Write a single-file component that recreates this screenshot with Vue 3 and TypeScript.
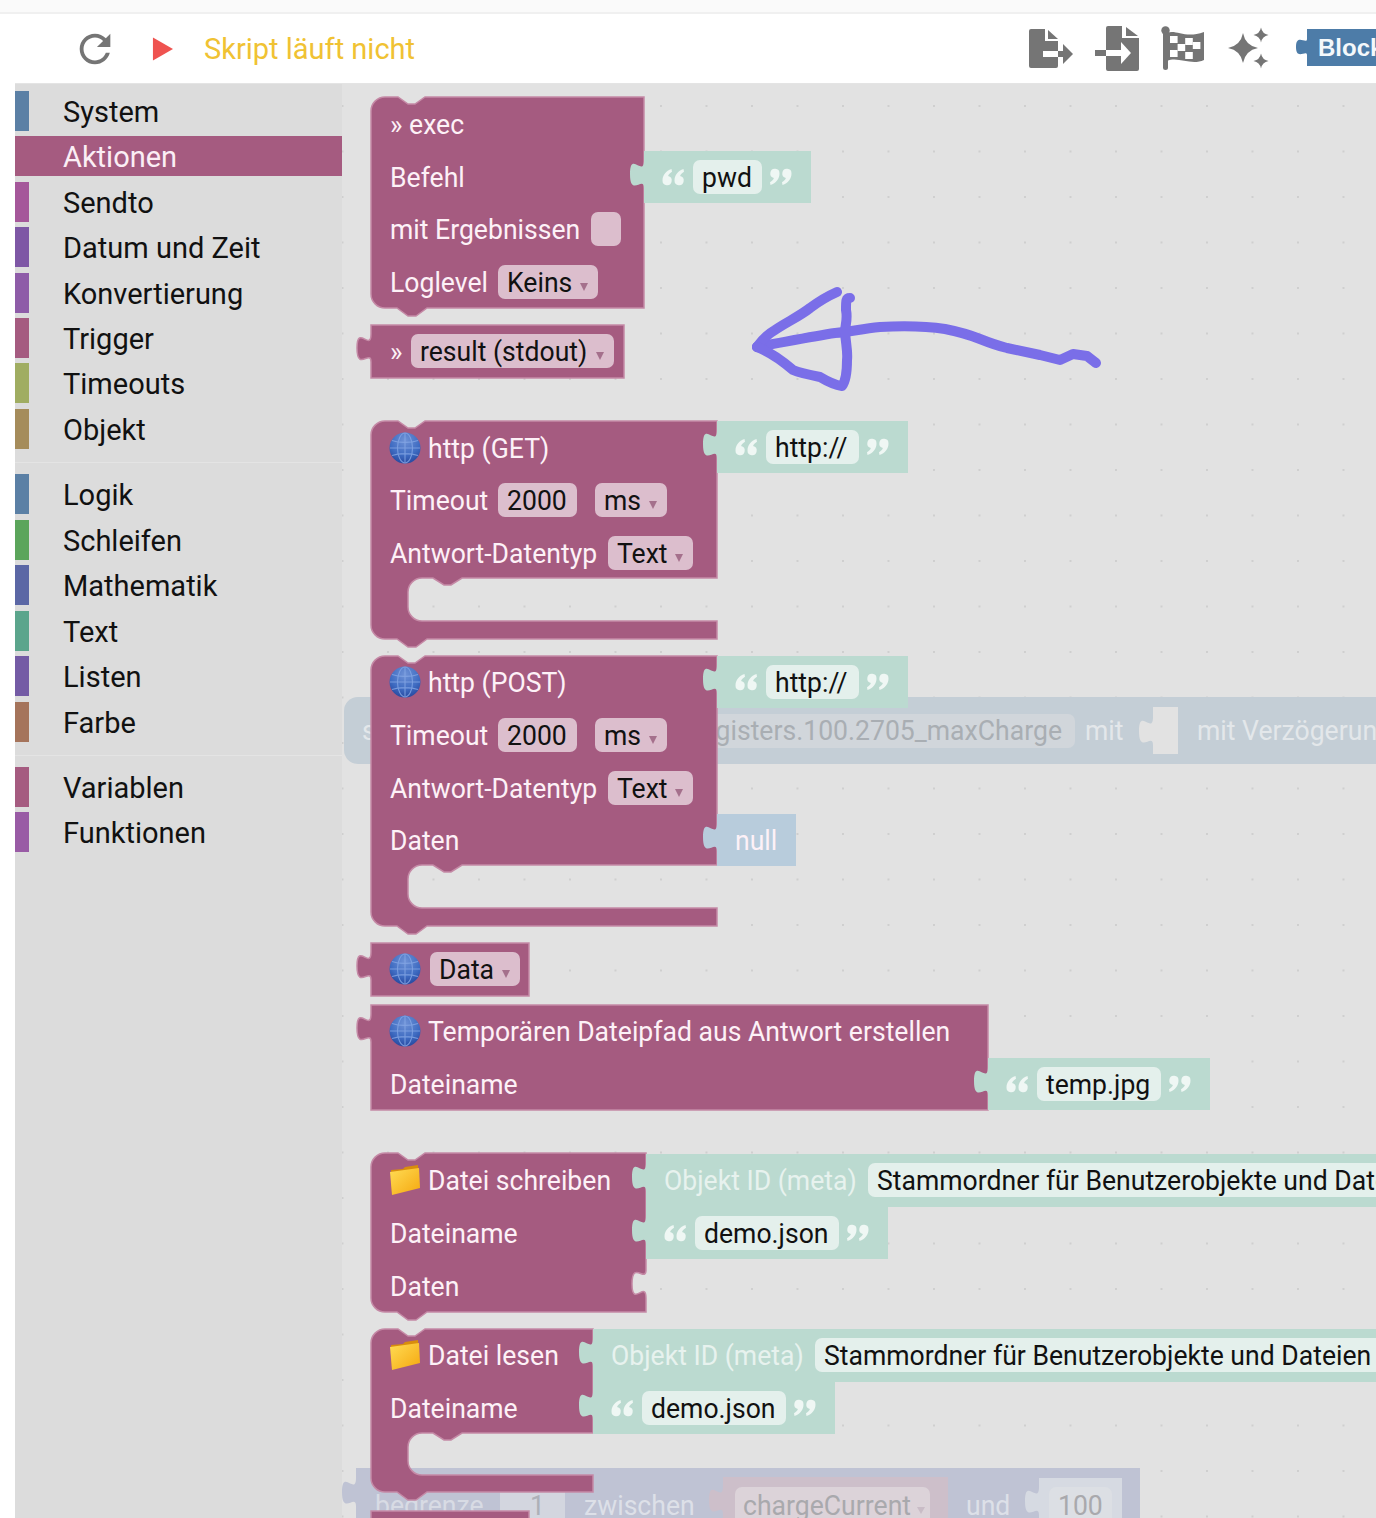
<script setup lang="ts">
interface Label { x: number; y: number; t: string; c?: string }
interface Field { x: number; y: number; w: number; t?: string; arrow?: boolean; fill?: string }
interface Block {
  d: string
  fill: string
  stroke?: string
  labels?: Label[]
  fields?: Field[]
  quotes?: { x: number; y: number; close?: boolean }[]
  globe?: { x: number; y: number }
  folder?: { x: number; y: number }
}

const MAUVE = '#a55b80'
const MAUVE_EDGE = '#c58aa6'
const GREEN = '#bbdad0'
const BLUE = '#b8ccdc'

const menuTop = [
  { name: 'System', color: '#5b80a5' },
  { name: 'Aktionen', color: MAUVE, active: true },
  { name: 'Sendto', color: '#a5579a' },
  { name: 'Datum und Zeit', color: '#7e57a5' },
  { name: 'Konvertierung', color: '#8e5ca8' },
  { name: 'Trigger', color: MAUVE },
  { name: 'Timeouts', color: '#a0ad62' },
  { name: 'Objekt', color: '#a58c5b' }
]
const menuMid = [
  { name: 'Logik', color: '#5b80a5' },
  { name: 'Schleifen', color: '#5ba55b' },
  { name: 'Mathematik', color: '#5b67a5' },
  { name: 'Text', color: '#5ba58c' },
  { name: 'Listen', color: '#745ba5' },
  { name: 'Farbe', color: '#a5745b' }
]
const menuEnd = [
  { name: 'Variablen', color: MAUVE },
  { name: 'Funktionen', color: '#995ba5' }
]

const tab = 'c 0,-13 -14,10 -14,-14 s 14,4 14,-14'

// value block with a puzzle tab on its left edge
function valuePath(x: number, y: number, w: number, h: number, tabOffset = 9) {
  return `M ${x},${y} H ${x + w} V ${y + h} H ${x} V ${y + tabOffset + 28} ${tab} Z`
}

// statement block: notch on top, bump below, optional C-shaped mouth
function stackPath(x: number, y: number, w: number, h: number, mouth?: [number, number], socketY?: number) {
  const r = 14
  const right = x + w
  let d = `M ${x},${y + r} a ${r},${r} 0 0 1 ${r},${-r} H ${x + 27} l 10,7 7,0 10,-7 H ${right}`
  if (socketY !== undefined) {
    d += ` V ${socketY} c 0,13 -14,-10 -14,14 s 14,-4 14,14`
  }
  if (mouth) {
    const mx = x + 37
    d += ` V ${mouth[0]} H ${x + 91} l -11,7 -7,0 -11,-7 H ${mx + r} a ${r},${r} 0 0 0 ${-r},${r}`
    d += ` V ${mouth[1] - r} a ${r},${r} 0 0 0 ${r},${r} H ${right}`
  }
  d += ` V ${y + h} H ${x + 56} l -11,8 -8,0 -11,-8 H ${x + r} a ${r},${r} 0 0 1 ${-r},${-r} Z`
  return d
}

function quoted(x: number, y: number, w: number, text: string): Block {
  const fieldW = w - 98
  return {
    d: valuePath(x, y, w, 52),
    fill: GREEN,
    quotes: [
      { x: x + 18, y: y + 17 },
      { x: x + 18 + 31 + fieldW + 8, y: y + 17, close: true }
    ],
    fields: [{ x: x + 49, y: y + 9, w: fieldW, t: text, fill: '#e4f0ec' }]
  }
}

function objectId(x: number, y: number, text: string): Block {
  return {
    d: valuePath(x, y, 1400 - x, 53),
    fill: GREEN,
    labels: [{ x: x + 18, y: y + 36, t: 'Objekt ID (meta)', c: 'dim' }],
    fields: [{ x: x + 222, y: y + 9, w: 1400 - x - 222, t: text, fill: '#e4f0ec' }]
  }
}

const blocks: Block[] = [
  {
    d: stackPath(371, 97, 273, 211),
    fill: MAUVE,
    stroke: MAUVE_EDGE,
    labels: [
      { x: 390, y: 134, t: '» exec' },
      { x: 390, y: 187, t: 'Befehl' },
      { x: 390, y: 239, t: 'mit Ergebnissen' },
      { x: 390, y: 292, t: 'Loglevel' }
    ],
    fields: [
      { x: 591, y: 212, w: 30 },
      { x: 498, y: 265, w: 100, t: 'Keins', arrow: true }
    ]
  },
  quoted(644, 151, 167, 'pwd'),
  {
    d: valuePath(371, 325, 253, 53),
    fill: MAUVE,
    stroke: MAUVE_EDGE,
    labels: [{ x: 390, y: 361, t: '»' }],
    fields: [{ x: 411, y: 334, w: 203, t: 'result (stdout)', arrow: true }]
  },
  {
    d: stackPath(371, 421, 346, 218, [578, 621]),
    fill: MAUVE,
    stroke: MAUVE_EDGE,
    globe: { x: 405, y: 448 },
    labels: [
      { x: 428, y: 458, t: 'http (GET)' },
      { x: 390, y: 510, t: 'Timeout' },
      { x: 390, y: 563, t: 'Antwort-Datentyp' }
    ],
    fields: [
      { x: 498, y: 483, w: 79, t: '2000' },
      { x: 595, y: 483, w: 72, t: 'ms', arrow: true },
      { x: 608, y: 536, w: 85, t: 'Text', arrow: true }
    ]
  },
  quoted(717, 421, 191, 'http://'),
  {
    d: stackPath(371, 656, 346, 270, [865, 908]),
    fill: MAUVE,
    stroke: MAUVE_EDGE,
    globe: { x: 405, y: 682 },
    labels: [
      { x: 428, y: 692, t: 'http (POST)' },
      { x: 390, y: 745, t: 'Timeout' },
      { x: 390, y: 798, t: 'Antwort-Datentyp' },
      { x: 390, y: 850, t: 'Daten' }
    ],
    fields: [
      { x: 498, y: 718, w: 79, t: '2000' },
      { x: 595, y: 718, w: 72, t: 'ms', arrow: true },
      { x: 608, y: 771, w: 85, t: 'Text', arrow: true }
    ]
  },
  quoted(717, 656, 191, 'http://'),
  {
    d: valuePath(717, 814, 79, 52),
    fill: BLUE,
    labels: [{ x: 735, y: 850, t: 'null' }]
  },
  {
    d: valuePath(371, 943, 158, 53),
    fill: MAUVE,
    stroke: MAUVE_EDGE,
    globe: { x: 405, y: 969 },
    fields: [{ x: 430, y: 952, w: 90, t: 'Data', arrow: true }]
  },
  {
    d: valuePath(371, 1005, 617, 105),
    fill: MAUVE,
    stroke: MAUVE_EDGE,
    globe: { x: 405, y: 1031 },
    labels: [
      { x: 428, y: 1041, t: 'Temporären Dateipfad aus Antwort erstellen' },
      { x: 390, y: 1094, t: 'Dateiname' }
    ]
  },
  quoted(988, 1058, 222, 'temp.jpg'),
  {
    d: stackPath(371, 1153, 275, 159, undefined, 1270),
    fill: MAUVE,
    stroke: MAUVE_EDGE,
    folder: { x: 389, y: 1164 },
    labels: [
      { x: 428, y: 1190, t: 'Datei schreiben' },
      { x: 390, y: 1243, t: 'Dateiname' },
      { x: 390, y: 1296, t: 'Daten' }
    ]
  },
  objectId(646, 1154, 'Stammordner für Benutzerobjekte und Dateien'),
  quoted(646, 1207, 242, 'demo.json'),
  {
    d: stackPath(371, 1329, 222, 163, [1433, 1475]),
    fill: MAUVE,
    stroke: MAUVE_EDGE,
    folder: { x: 389, y: 1339 },
    labels: [
      { x: 428, y: 1365, t: 'Datei lesen' },
      { x: 390, y: 1418, t: 'Dateiname' }
    ]
  },
  objectId(593, 1329, 'Stammordner für Benutzerobjekte und Dateien'),
  quoted(593, 1382, 242, 'demo.json')
]

const ghostLimit = valuePath(356, 1468, 784, 80, 10)
const ghostPink = valuePath(723, 1477, 225, 60, 9)
const ghostNum = valuePath(1039, 1478, 83, 60, 9)
const ghostSocket = valuePath(1153, 707, 25, 47, 10)

const flagCells: { x: number; y: number }[] = []
const wave = [0, 1, 2, -1]
for (let i = 0; i < 4; i++) {
  for (let j = 0; j < 3; j++) {
    if ((i + j) % 2 === 0) flagCells.push({ x: 4 + i * 7.6, y: 3 + j * 7 + wave[i] })
  }
}

function star(cx: number, cy: number, r: number) {
  const k = r * 0.16
  return `M ${cx},${cy - r} Q ${cx + k},${cy - k} ${cx + r},${cy} Q ${cx + k},${cy + k} ${cx},${cy + r} Q ${cx - k},${cy + k} ${cx - r},${cy} Q ${cx - k},${cy - k} ${cx},${cy - r} Z`
}

const quoteMark = 'M9.5 1 C4 3 0.5 7 0.5 12.5 a4.6 4.6 0 1 0 5.6 -4.4 C6.6 6.4 8 5 10 3.8 Z'
</script>

<template>
  <div class="page">
    <div class="strip"></div>
    <header class="toolbar">
      <svg class="ic-refresh" viewBox="0 0 24 24"><path fill="#757575" d="M17.65 6.35C16.2 4.9 14.21 4 12 4c-4.42 0-7.99 3.58-7.99 8s3.57 8 7.99 8c3.73 0 6.84-2.55 7.73-6h-2.08c-.82 2.33-3.04 4-5.65 4-3.31 0-6-2.69-6-6s2.69-6 6-6c1.66 0 3.14.69 4.22 1.78L13 11h7V4l-2.35 2.35z" /></svg>
      <svg class="ic-play" viewBox="0 0 22 24"><path fill="#ef5350" d="M1 0 L22 12 L1 24 Z" /></svg>
      <span class="status">Skript läuft nicht</span>
      <div class="tools">
        <svg width="44" height="40" viewBox="0 0 44 40">
          <path fill="#757575" d="M2 0 H16 V12 H29 V37 a2 2 0 0 1 -2 2 H2 a2 2 0 0 1 -2 -2 V2 a2 2 0 0 1 2 -2 Z" />
          <path fill="#757575" d="M19 1 L29 10 H19 Z" />
          <rect x="14" y="22" width="15" height="6" fill="#fff" />
          <rect x="29" y="22" width="6" height="6" fill="#757575" />
          <path fill="#757575" d="M34 15 L44 25 L34 35 Z" />
        </svg>
        <svg width="44" height="46" viewBox="0 0 44 46">
          <path fill="#757575" d="M13 0 H27 V12 H44 V43 a2 2 0 0 1 -2 2 H13 a2 2 0 0 1 -2 -2 V2 a2 2 0 0 1 2 -2 Z" />
          <path fill="#757575" d="M31 1 L43 10 H31 Z" />
          <rect x="0" y="24" width="11" height="6" fill="#757575" />
          <rect x="11" y="24" width="16" height="6" fill="#fff" />
          <path fill="#fff" d="M26 16 L36 27 L26 38 Z" />
        </svg>
        <svg width="45" height="46" viewBox="0 0 45 46">
          <rect x="2" y="3" width="5" height="41" rx="2.5" fill="#757575" />
          <circle cx="4.5" cy="4.5" r="4.2" fill="#757575" />
          <path fill="#757575" d="M6 7 C15 3 24 13 43 6 V34 C30 40 17 30 6 35 Z" />
          <g transform="translate(5 7)">
            <rect v-for="(c, i) in flagCells" :key="i" :x="c.x" :y="c.y" width="7.6" height="7" fill="#fff" />
          </g>
        </svg>
        <svg width="46" height="44" viewBox="0 0 46 44">
          <path fill="#757575" :d="star(15, 21, 15)" />
          <path fill="#757575" :d="star(33, 8, 7.5)" />
          <path fill="#757575" :d="star(33, 34, 7.5)" />
        </svg>
        <svg class="ic-block" width="110" height="40" viewBox="0 0 110 40">
          <path fill="#4d7ca8" d="M11 1 H110 V38 H11 V27 c 0,-6 -11,6 -11,-8 s 11,-2 11,-8 Z" />
          <text x="22" y="28" class="block-btn">Blockly</text>
        </svg>
      </div>
    </header>

    <main class="main">
      <nav class="sidebar">
        <div v-for="m in menuTop" :key="m.name" class="row" :class="{ active: m.active }">
          <span class="swatch" :style="{ background: m.color }"></span>{{ m.name }}
        </div>
        <div class="sep"></div>
        <div v-for="m in menuMid" :key="m.name" class="row">
          <span class="swatch" :style="{ background: m.color }"></span>{{ m.name }}
        </div>
        <div class="sep"></div>
        <div v-for="m in menuEnd" :key="m.name" class="row">
          <span class="swatch" :style="{ background: m.color }"></span>{{ m.name }}
        </div>
      </nav>

      <div class="workspace">
        <svg class="canvas" viewBox="342 84 1034 1434" width="1034" height="1434">
          <defs>
            <pattern id="dots" patternUnits="userSpaceOnUse" x="341.5" y="59.5" width="45.5" height="45.5">
              <rect width="2" height="2" fill="#cfcfcf" />
            </pattern>
            <radialGradient id="globeFill" cx="50%" cy="25%" r="80%">
              <stop offset="0" stop-color="#6f92d6" />
              <stop offset="0.6" stop-color="#3f6cc2" />
              <stop offset="1" stop-color="#23439a" />
            </radialGradient>
            <linearGradient id="folderFill" x1="0" y1="0" x2="1" y2="1">
              <stop offset="0" stop-color="#ffdc55" />
              <stop offset="1" stop-color="#f5a80f" />
            </linearGradient>
            <symbol id="globe" viewBox="-16 -16 32 32" overflow="visible">
              <circle r="15.5" fill="url(#globeFill)" />
              <g fill="none" stroke="#86a8e6" stroke-width="1.1" opacity="0.8">
                <ellipse rx="7.5" ry="15" />
                <path d="M0 -15 V15 M-15 0 H15 M-13 -7.5 C-6 -5 6 -5 13 -7.5 M-13 7.5 C-6 5 6 5 13 7.5" />
              </g>
            </symbol>
            <symbol id="folder" viewBox="0 0 32 32">
              <path fill="#d88d0c" d="M2 6 L14 5 L16 3 L29 1 L30 20 L3 30 Z" />
              <path fill="url(#folderFill)" d="M1 8 L30 4 L31 24 L3 31 Z" />
            </symbol>
          </defs>

          <rect x="342" y="84" width="1034" height="1434" fill="url(#dots)" />

          <!-- dragged blocks behind, faded -->
          <rect x="344" y="697" width="1100" height="67" rx="14" fill="#c4ced6" />
          <text x="362" y="740" class="lbl" fill="#e3e7ea">s</text>
          <rect x="640" y="714" width="435" height="34" rx="7" fill="#d1d6db" />
          <text x="1062" y="740" class="lbl lbl-end" fill="#a9aeb3" text-anchor="end">registers.100.2705_maxCharge</text>
          <text x="1085" y="740" class="lbl" fill="#e3e7ea">mit</text>
          <path :d="ghostSocket" fill="#e2e2e2" />
          <text x="1197" y="740" class="lbl" fill="#e3e7ea">mit Verzögerung</text>

          <path :d="ghostLimit" fill="#bfc3d4" />
          <text x="375" y="1515" class="lbl" fill="#d8dbe4">begrenze</text>
          <rect x="500" y="1478" width="65" height="40" fill="#d3d6df" />
          <text x="530" y="1515" class="lbl" fill="#adb0b8">1</text>
          <text x="584" y="1515" class="lbl" fill="#dde0e8">zwischen</text>
          <path :d="ghostPink" fill="#cdbfca" />
          <rect x="735" y="1487" width="195" height="40" rx="7" fill="#dcd3d9" />
          <text x="743" y="1515" class="lbl" fill="#a9a9ad">chargeCurrent</text>
          <path d="M917 1507 h8 l-4 7 Z" fill="#c9bcc6" />
          <text x="966" y="1515" class="lbl" fill="#dde0e8">und</text>
          <path :d="ghostNum" fill="#d6dae2" />
          <rect x="1049" y="1487" width="63" height="40" rx="7" fill="#dcdfe4" />
          <text x="1058" y="1515" class="lbl" fill="#a9a9ad">100</text>

          <rect x="371" y="1511" width="158" height="12" fill="#a55b80" stroke="#c58aa6" stroke-width="1.5" />

          <g v-for="(b, i) in blocks" :key="i">
            <path :d="b.d" :fill="b.fill" :stroke="b.stroke || 'none'" stroke-width="1.5" />
            <use v-if="b.globe" href="#globe" :x="b.globe.x - 16" :y="b.globe.y - 16" width="32" height="32" />
            <use v-if="b.folder" href="#folder" :x="b.folder.x" :y="b.folder.y" width="32" height="32" />
            <text v-for="(l, k) in b.labels" :key="k" :x="l.x" :y="l.y" class="lbl" :fill="l.c === 'dim' ? '#e7f2ee' : '#fdf1f7'">{{ l.t }}</text>
            <g v-for="(q, k) in b.quotes" :key="k" :transform="q.close ? `translate(${q.x + 22} ${q.y + 18}) rotate(180)` : `translate(${q.x} ${q.y})`">
              <path :d="quoteMark" fill="#eff7f4" />
              <path :d="quoteMark" fill="#eff7f4" transform="translate(12 0)" />
            </g>
            <g v-for="(f, k) in b.fields" :key="k">
              <rect :x="f.x" :y="f.y" :width="f.w" height="34" rx="7" :fill="f.fill || '#dcbecd'" />
              <text v-if="f.t" :x="f.x + 9" :y="f.y + 27" class="lbl" fill="#111">{{ f.t }}</text>
              <path v-if="f.arrow" :d="`M${f.x + f.w - 18} ${f.y + 18} h8 l-4 8 Z`" fill="#a5708c" />
            </g>
          </g>

          <!-- hand drawn arrow on top of the screenshot -->
          <g fill="none" stroke="#7a6ee8" stroke-width="10" stroke-linecap="round" stroke-linejoin="round">
            <path d="M1096 363 L1087 356 L1073 354 L1060 360 L1040 355 L1007 348 C995 345 985 341 980 339 C965 333 955 331 945 329 C925 326 900 326 880 327 C860 329 850 332 835 333 C815 336 790 341 757 347" />
            <path d="M757 347 C762 340 768 334 775 330 C785 323 800 316 810 308 C818 302 828 296 837 292" />
            <path d="M850 298 C846 298 846 300 846 310 C848 320 845 325 845 332 C846 345 848 352 847 360 C847 372 845 382 842 386 C835 385 825 380 820 377 C810 375 800 373 793 370 C785 363 770 352 757 347" />
          </g>
        </svg>
      </div>
    </main>
  </div>
</template>

<style>
html, body {
  margin: 0;
  overflow: hidden;
  background: #fff;
}
</style>

<style scoped>
.page {
  width: 1376px;
  height: 1518px;
  overflow: hidden;
  box-sizing: border-box;
  padding-left: 15px;
  background: #fff;
  font-family: Roboto, sans-serif;
  display: flex;
  flex-direction: column;
}
.strip {
  height: 12px;
  margin-left: -15px;
  background: #fafafa;
  border-bottom: 2px solid #f0f0f0;
  flex: none;
}
.toolbar {
  height: 69px;
  flex: none;
  display: flex;
  align-items: center;
  background: #fff;
  border-bottom: 1px solid #e4e4e4;
}
.ic-refresh {
  width: 46px;
  height: 46px;
  margin-left: 57px;
  flex: none;
}
.ic-play {
  width: 21px;
  height: 24px;
  margin-left: 34px;
  flex: none;
}
.status {
  margin-left: 31px;
  font-size: 29px;
  color: #f0c233;
  white-space: nowrap;
}
.tools {
  margin-left: auto;
  margin-right: -30px;
  display: flex;
  align-items: center;
  gap: 22px;
  flex: none;
}
.tools svg {
  flex: none;
}
.ic-block {
  margin-top: -1px;
}
.block-btn {
  font-family: "Liberation Sans", Arial, sans-serif;
  font-weight: 700;
  font-size: 24px;
  fill: #f4f8fb;
}
.main {
  flex: 1;
  min-height: 0;
  display: flex;
}
.sidebar {
  width: 327px;
  flex: none;
  box-sizing: border-box;
  padding-top: 6.8px;
  background: #dcdcdc;
}
.row {
  height: 40px;
  box-sizing: border-box;
  padding-top: 2px;
  margin-bottom: 5.45px;
  display: flex;
  align-items: center;
  font-size: 29px;
  color: #111;
  white-space: nowrap;
}
.row.active {
  background: #a55b80;
  color: #fbeef5;
}
.swatch {
  width: 14px;
  height: 40px;
  margin-top: -2px;
  margin-right: 34px;
  flex: none;
}
.sep {
  height: 1px;
  margin: 13px 0 11.5px;
  background: #e4e4e4;
}
.workspace {
  flex: 1;
  min-width: 0;
  background: #e2e2e2;
  overflow: hidden;
}
.canvas {
  display: block;
}
.lbl {
  font-family: Roboto, sans-serif;
  font-size: 28px;
  transform-box: fill-box;
  transform-origin: left center;
  transform: scaleX(0.95);
}
.lbl-end {
  transform-origin: right center;
}
</style>
